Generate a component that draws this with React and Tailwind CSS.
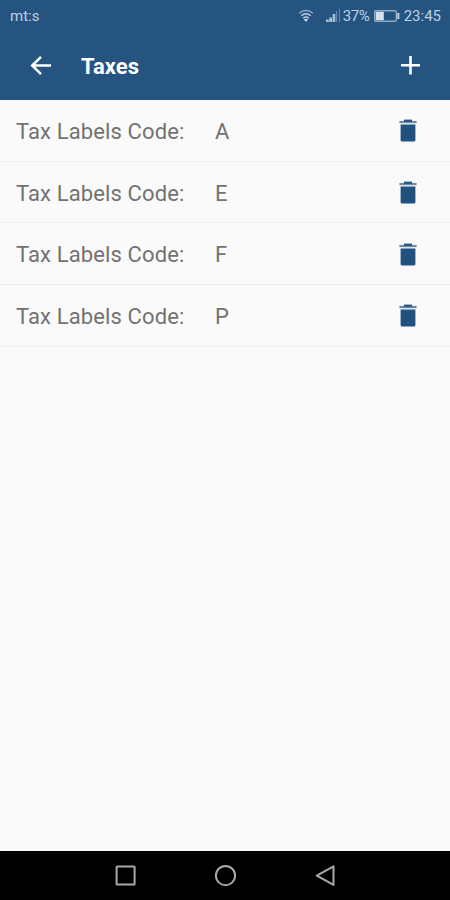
import React from 'react';

const taxes = [
  { id: 1, code: 'A' },
  { id: 2, code: 'E' },
  { id: 3, code: 'F' },
  { id: 4, code: 'P' }
];

function WifiIcon() {
  return (
    <svg width="16" height="14" viewBox="0 0 16 14" fill="none" stroke="#bdd0e2" strokeWidth="1.5">
      <path d="M1.2 4.2c4-3.500 9.600-3.500 13.600 0" stroke="#8fadc8" />
      <path d="M3.300 6.800c2.800-2.400 6.600-2.400 9.400 0" />
      <path d="M5.300 9.200c1.700-1.400 3.700-1.400 5.400 0" />
      <path d="M5.800 10h4.400L8 13z" fill="#d5e2ee" stroke="none" />
    </svg>
  );
}

function SignalIcon() {
  return (
    <svg width="15" height="14" viewBox="0 0 15 14">
      <path d="M0 13v-2.500h2.800V13zM3.300 13V8.500h2.700V13zM6.600 13V5h2.700v8z" fill="#a9c0d5" />
      <path d="M9.900 13V2h1.300v11zM13 13V0h1v13z" fill="#6589aa" />
    </svg>
  );
}

function BatteryIcon() {
  return (
    <svg width="26" height="12" viewBox="0 0 26 12">
      <rect x="0.700" y="0.700" width="21.600" height="10.600" rx="1" fill="none" stroke="#8eabc6" strokeWidth="1.400" />
      <rect x="1.800" y="1.800" width="8" height="8.400" fill="#d5e2ee" />
      <rect x="23.300" y="3" width="2" height="6" fill="#c9d9e8" />
    </svg>
  );
}

function TrashIcon() {
  return (
    <svg width="18" height="24" viewBox="0 0 18 24">
      <path d="M0.400 1.900h17.200v2.300H0.400z" fill="#6b8aa6" />
      <path d="M5 0.600h8v2.200H5z" fill="#24547f" />
      <path d="M1.600 5.600h14.800v15.400a1.500 1.500 0 0 1-1.500 1.500H3.100a1.500 1.500 0 0 1-1.500-1.500z" fill="#20517f" />
    </svg>
  );
}

function StatusBar() {
  return (
    <div className="flex h-8 items-center justify-between pl-[10px] pr-[9px] text-[#bdd0e2]">
      <span className="text-[15px] leading-none">mt:s</span>
      <div className="flex items-center">
        <WifiIcon />
        <span className="ml-[12px]">
          <SignalIcon />
        </span>
        <span className="ml-[2px] w-[28px] text-[15px] leading-none tracking-[-0.4px]">37%</span>
        <span className="ml-[3px]">
          <BatteryIcon />
        </span>
        <span className="ml-[4px] text-[15px] leading-none">23:45</span>
      </div>
    </div>
  );
}

function AppBar() {
  return (
    <div className="flex h-[68px] items-center px-[30px]">
      <button type="button" aria-label="Back">
        <svg width="22" height="20" viewBox="0 0 22 20" fill="none" stroke="#fff" strokeWidth="2.500">
          <path d="M21 9.500H2.500M11 0.900L2.200 9.500L11 18.100" />
        </svg>
      </button>
      <h1 className="ml-[29px] pt-[2px] text-[22px] font-bold leading-none text-white">Taxes</h1>
      <button type="button" aria-label="Add" className="ml-auto">
        <svg width="20" height="20" viewBox="0 0 20 20" fill="none" stroke="#fff" strokeWidth="2.600">
          <path d="M10.500 0v18.500M1 9.200h19" />
        </svg>
      </button>
    </div>
  );
}

function TaxRow({ code }) {
  return (
    <li className="flex h-[61.700px] items-center border-b border-[#efefef] pl-4 pr-[33px] pt-[2px] text-[22px] text-[#727272]">
      <span className="w-[199px] tracking-[0.120px]">Tax Labels Code:</span>
      <span>{code}</span>
      <button type="button" aria-label="Delete" className="ml-auto">
        <TrashIcon />
      </button>
    </li>
  );
}

function NavBar() {
  return (
    <div className="flex h-[49px] items-center justify-center gap-[78px] bg-black">
      <svg width="22" height="22" viewBox="0 0 22 22" fill="none" stroke="#a9a9a9" strokeWidth="2">
        <rect x="2.600" y="1.600" width="18" height="18" rx="0.500" />
      </svg>
      <svg width="22" height="22" viewBox="0 0 22 22" fill="none" stroke="#a9a9a9" strokeWidth="2">
        <circle cx="11.500" cy="10.600" r="9.600" />
      </svg>
      <svg width="22" height="22" viewBox="0 0 22 22" fill="none" stroke="#a9a9a9" strokeWidth="2" strokeLinejoin="round">
        <path d="M19.500 1.300v18.600L2.800 10.600z" />
      </svg>
    </div>
  );
}

function App() {
  return (
    <div className="flex h-screen flex-col bg-[#fafafa] font-['Roboto',sans-serif]">
      <header className="bg-[#24547f]">
        <StatusBar />
        <AppBar />
      </header>
      <ul className="flex-1">
        {taxes.map((tax) => (
          <TaxRow key={tax.id} code={tax.code} />
        ))}
      </ul>
      <NavBar />
    </div>
  );
}

export default App;
